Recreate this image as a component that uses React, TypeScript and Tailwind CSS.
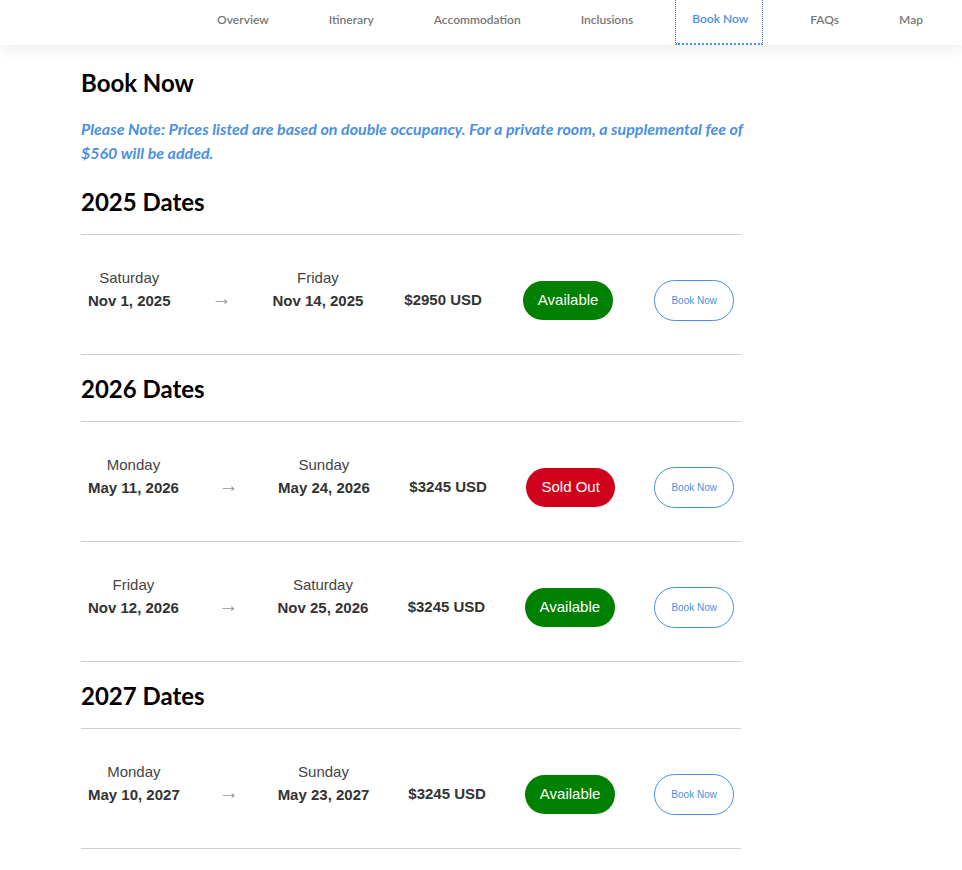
import * as React from "react";

const NAV = ["Overview", "Itinerary", "Accommodation", "Inclusions", "Book Now", "FAQs", "Map"];

type Row = {
  startDay: string;
  startDate: string;
  endDay: string;
  endDate: string;
  price: string;
  soldOut?: boolean;
};

const SECTIONS: { year: string; rows: Row[] }[] = [
  {
    year: "2025 Dates",
    rows: [
      { startDay: "Saturday", startDate: "Nov 1, 2025", endDay: "Friday", endDate: "Nov 14, 2025", price: "$2950 USD" },
    ],
  },
  {
    year: "2026 Dates",
    rows: [
      { startDay: "Monday", startDate: "May 11, 2026", endDay: "Sunday", endDate: "May 24, 2026", price: "$3245 USD", soldOut: true },
      { startDay: "Friday", startDate: "Nov 12, 2026", endDay: "Saturday", endDate: "Nov 25, 2026", price: "$3245 USD" },
    ],
  },
  {
    year: "2027 Dates",
    rows: [
      { startDay: "Monday", startDate: "May 10, 2027", endDay: "Sunday", endDate: "May 23, 2027", price: "$3245 USD" },
    ],
  },
];

function DateBlock({ day, date }: { day: string; date: string }) {
  return (
    <div className="flex flex-col items-center pb-[24px] leading-[23px]">
      <div className="text-[15px] text-[#444]">{day}</div>
      <div className="text-[15px] font-bold text-[#333]">{date}</div>
    </div>
  );
}

function DateRow({ row }: { row: Row }) {
  return (
    <div className="flex h-[120px] items-center justify-between border-b border-[#cfcfcf] px-[7px] pt-[12px] font-['Liberation_Sans',Arial,sans-serif]">
      <DateBlock day={row.startDay} date={row.startDate} />
      <div className="pb-[5px] text-[20px] leading-none text-[#999]">→</div>
      <DateBlock day={row.endDay} date={row.endDate} />
      <div className="text-[15px] font-bold text-[#333]">{row.price}</div>
      {row.soldOut ? (
        <div className="flex h-[39px] items-center rounded-full bg-[#d0021b] px-[15px] text-[15px] text-white">
          Sold Out
        </div>
      ) : (
        <div className="flex h-[39px] items-center rounded-full bg-[#008000] px-[15px] text-[15px] text-white">
          Available
        </div>
      )}
      <button className="flex h-[41px] items-center rounded-full border border-[#4a90e2] bg-white px-[16px] text-[10px] text-[#4a90e2]">
        Book Now
      </button>
    </div>
  );
}

export default function App() {
  return (
    <div className="min-h-[870px] bg-white font-['Lato',sans-serif]">
      {/* Top nav */}
      <header className="relative z-10 h-[45px] bg-white shadow-[0_4px_14px_rgba(0,0,0,0.07)]">
        <nav className="flex h-full items-stretch justify-end pr-[9px]">
          {NAV.map((x) => {
            const active = x === "Book Now";
            return (
              <a
                key={x}
                href="#"
                className={
                  active
                    ? "ml-[12px] mr-[17px] flex items-center border-x border-dotted border-b-2 border-x-[#4a6fa5] border-b-[#4a90e2] pl-[16px] pr-[14px] pb-[6px] text-[12px] font-semibold text-[#4a90e2]"
                    : "mx-[12px] flex items-center px-[18px] pb-[6px] text-[12px] font-semibold text-[#777]"
                }
              >
                {x}
              </a>
            );
          })}
        </nav>
      </header>

      <main className="ml-[81px] w-[660px] pt-[22px]">
        <h1 className="text-[24px] font-bold leading-[32px] text-black">Book Now</h1>
        <p className="mt-[18px] w-[670px] text-[16px] font-bold italic leading-[24px] text-[#4a90e2]">
          Please Note: Prices listed are based on double occupancy. For a private room, a supplemental fee of $560 will be added.
        </p>

        {SECTIONS.map((s, i) => (
          <section key={s.year}>
            <h2
              className={
                (i === 0 ? "pt-[21px]" : "pt-[18px]") +
                " border-b border-[#cfcfcf] pb-[16px] text-[24px] font-bold leading-[32px] text-black"
              }
            >
              {s.year}
            </h2>
            {s.rows.map((r) => (
              <DateRow key={r.startDate} row={r} />
            ))}
          </section>
        ))}
      </main>
    </div>
  );
}
